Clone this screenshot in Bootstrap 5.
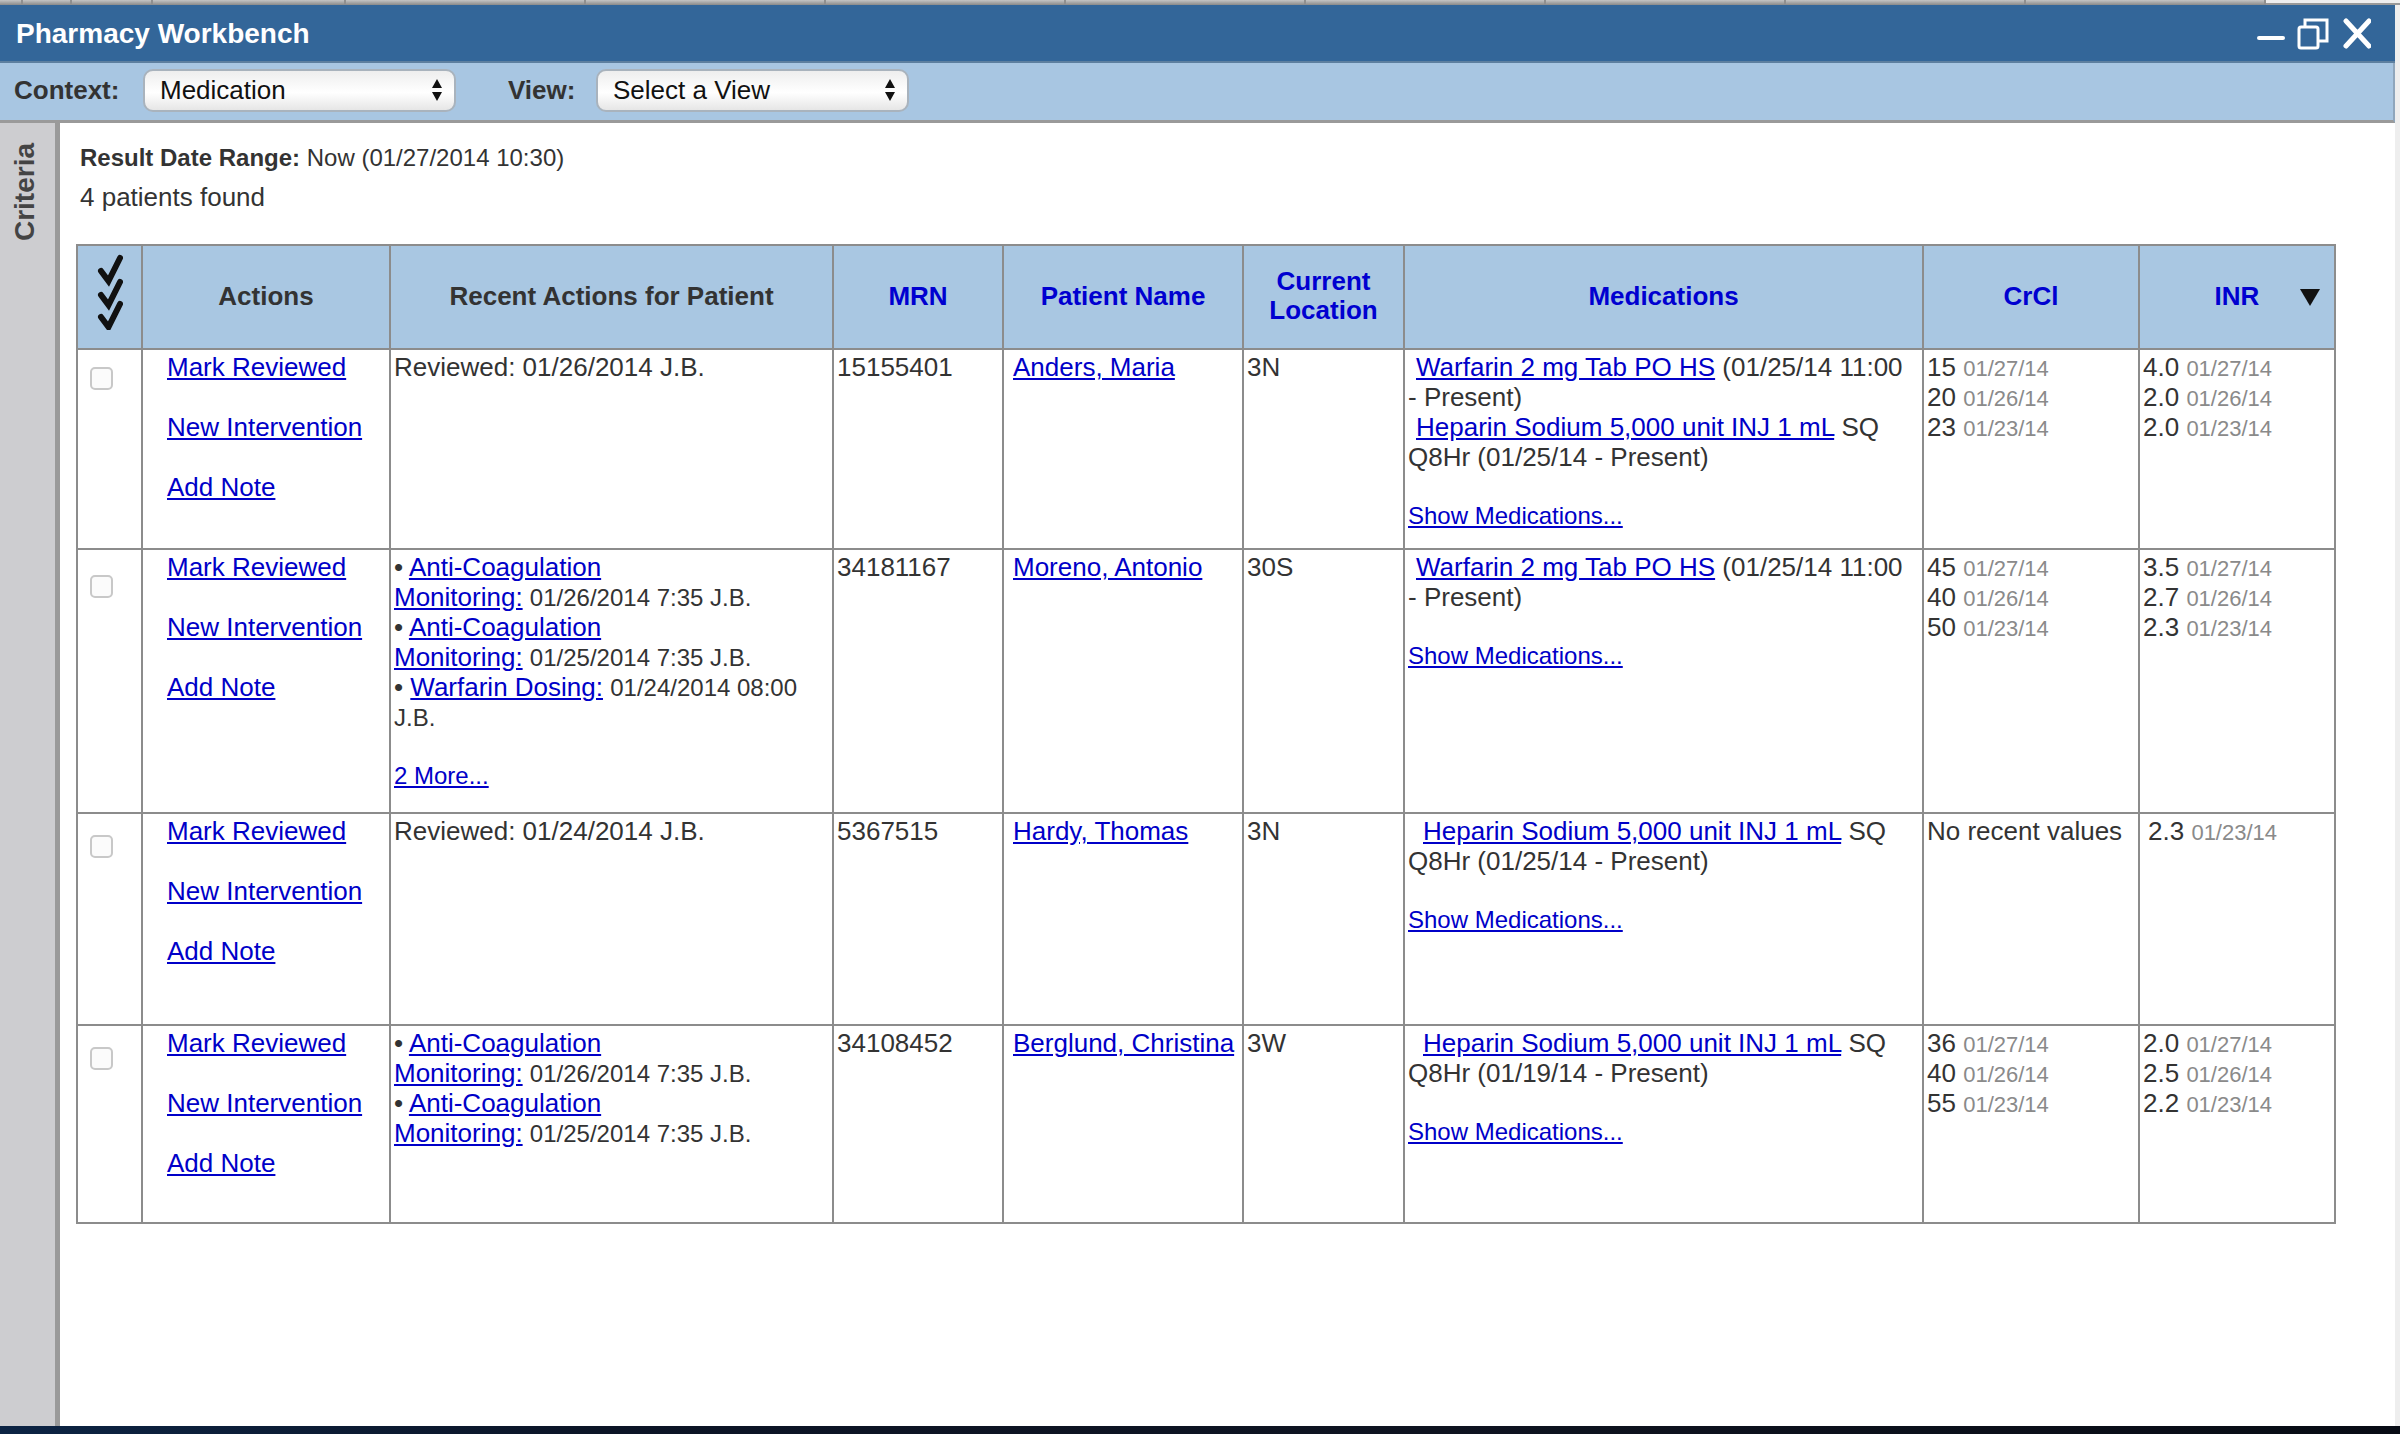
<!DOCTYPE html>
<html lang="en">
<head>
<meta charset="utf-8">
<title>Pharmacy Workbench</title>
<link href="https://cdn.jsdelivr.net/npm/bootstrap@5.3.0/dist/css/bootstrap.min.css" rel="stylesheet">
<style>
html,body{height:100%;margin:0;}
body{font-family:"Liberation Sans",Arial,sans-serif;font-size:26px;line-height:30px;color:#333;background:#eee;overflow:hidden;}
a{color:#0000c8;text-decoration:underline;}
.page-shell{height:1434px;}
.top-strip{height:5px;}
.top-tick{height:5px;background:linear-gradient(#c4c4c4,#8a8a8a);border-right:2px solid #8f8f8f;}
.top-rest{height:5px;background:#eee;border-bottom:2px solid #999;}
.t1{width:23px}.t2{width:49px}.t3{width:81px}.t4{width:193px}.t5{width:240px}
.wb-window{height:1421px;padding-right:5px;}
.wb-title{height:58px;background:#336699;color:#fff;font-size:28px;font-weight:700;padding:2px 24px 0 16px;border-bottom:2px solid #5d7f9f;}
.wb-tools{height:60px;background:#a8c6e2;border-bottom:3px solid #9a9a9a;padding:0 0 3px 14px;font-weight:700;border-right:2px solid #8fa6bc;}
.ctx-label{width:129px;}
.view-label{width:88px;margin-left:52px;}
.pick-wrap{width:313px;height:43px;border:2px solid #a9b3bd;border-radius:10px;background:linear-gradient(#eeeeee,#fff 55%,#e6e6e6);color:#111;font-weight:400;padding-left:15px;}
.pick-arrows{margin-right:11px;}
.wb-body{height:1303px;background:#fff;}
.crit-rail{width:60px;background:#cdcdd0;border-right:5px solid #9a9a9a;padding-top:20px;}
.crit-text{writing-mode:vertical-rl;transform:rotate(180deg);font-size:28px;font-weight:700;color:#444;margin-left:10px;width:30px;}
.wb-main{padding:20px 0 0 16px;margin-right:3px;}
.meta-line{padding-left:4px;height:39px;}
.meta-small{font-size:24px;}
.grid-wrap{margin-top:23px;}
.wb-grid{table-layout:fixed;border-collapse:collapse;width:2258px;border:2px solid #888;}
.wb-grid th,.wb-grid td{border:2px solid #8c8c8c;padding:2px 3px 0;vertical-align:top;font-weight:400;}
.wb-grid th{background:#a9c7e2;text-align:center;vertical-align:middle;font-weight:700;padding:0 0 2px;position:relative;line-height:29px;}
.wb-grid th.sortable{color:#0000d0;}
.c1{width:65px}.c2{width:248px}.c3{width:443px}.c4{width:170px}.c5{width:240px}.c6{width:161px}.c7{width:519px}.c8{width:216px}.c9{width:196px}
.hd-row{height:104px}.r1{height:200px}.r2{height:264px}.r3{height:212px}.r4{height:198px}
.wb-grid td.act-cell{padding-left:24px;}
.wb-grid td.name-cell{padding-left:9px;}
.wb-grid td.med-cell{padding-right:10px;}
.act-item{height:60px;}
.ck-box{width:23px;height:23px;margin:0;border:2px solid #c8c8c8;border-radius:5px;background:#fbfbfb;display:block;appearance:none;}
.ck-a{margin:15px 0 0 9px}.ck-b{margin:23px 0 0 9px}.ck-c{margin:19px 0 0 9px}
.sm-txt{font-size:24px;line-height:1;}
.gr{font-size:22px;color:#8a8a8a;line-height:1;}
.gap-line{height:28px;}
.ind1{margin-left:8px}.ind2{margin-left:15px}.ind3{margin-left:5px}
.checks-ico{display:block;margin:-8px auto 0;}
.sort-tri{position:absolute;right:14px;top:43px;width:0;height:0;border-left:10px solid transparent;border-right:10px solid transparent;border-top:17px solid #111;}
.bot-strip{height:8px;background:linear-gradient(90deg,#0c2444,#0b1426 25%,#0e1320 60%,#070b14);}
</style>
</head>
<body>
<div class="page-shell d-flex flex-column">
  <div class="top-strip d-flex">
    <div class="top-tick t1"></div><div class="top-tick t2"></div><div class="top-tick t3"></div><div class="top-tick t4"></div><div class="top-tick t5"></div><div class="top-tick t5"></div><div class="top-tick t5"></div><div class="top-tick t5"></div><div class="top-tick t5"></div><div class="top-tick t5"></div><div class="top-tick t5"></div><div class="top-tick t5"></div><div class="top-rest flex-grow-1"></div>
  </div>
  <div class="wb-window d-flex flex-column">
    <div class="wb-title d-flex align-items-center justify-content-between">
      <span>Pharmacy Workbench</span>
      <svg width="116" height="34" viewBox="0 0 116 34" aria-hidden="true">
        <rect x="2" y="19" width="28" height="4" rx="2" fill="#fff"/>
        <g fill="none" stroke="#fff" stroke-width="3">
          <rect x="44" y="10" width="19" height="21" rx="2"/>
          <path d="M50 10V3h22v21h-9"/>
        </g>
        <path d="M91 4l23 25M114 4L91 29" stroke="#fff" stroke-width="5" stroke-linecap="round" fill="none"/>
      </svg>
    </div>
    <div class="wb-tools d-flex align-items-center">
      <span class="ctx-label">Context:</span>
      <div class="pick-wrap d-flex align-items-center justify-content-between">
        <span>Medication</span>
        <svg class="pick-arrows" width="12" height="24" viewBox="0 0 12 24" aria-hidden="true"><path d="M6 1l5 9H1zM6 23l5-9H1z" fill="#111"/></svg>
      </div>
      <span class="view-label">View:</span>
      <div class="pick-wrap d-flex align-items-center justify-content-between">
        <span>Select a View</span>
        <svg class="pick-arrows" width="12" height="24" viewBox="0 0 12 24" aria-hidden="true"><path d="M6 1l5 9H1zM6 23l5-9H1z" fill="#111"/></svg>
      </div>
    </div>
    <div class="wb-body d-flex flex-grow-1">
      <div class="crit-rail flex-shrink-0"><div class="crit-text">Criteria</div></div>
      <div class="wb-main flex-grow-1">
        <div class="meta-line meta-small"><b>Result Date Range:</b> Now (01/27/2014 10:30)</div>
        <div class="meta-line">4 patients found</div>
        <div class="grid-wrap">
          <table class="wb-grid">
            <colgroup><col class="c1"><col class="c2"><col class="c3"><col class="c4"><col class="c5"><col class="c6"><col class="c7"><col class="c8"><col class="c9"></colgroup>
            <thead>
              <tr class="hd-row">
                <th>
                  <svg class="checks-ico" width="26" height="76" viewBox="0 0 26 76" aria-hidden="true"><g fill="none" stroke="#111" stroke-width="6" stroke-linecap="round" stroke-linejoin="miter"><path d="M4 17l7.500 10L23 4"/><path d="M4 41l7.500 10L23 28"/><path d="M4 63l7.500 10L23 50"/></g></svg>
                </th>
                <th>Actions</th>
                <th>Recent Actions for Patient</th>
                <th class="sortable">MRN</th>
                <th class="sortable">Patient Name</th>
                <th class="sortable">Current<br>Location</th>
                <th class="sortable">Medications</th>
                <th class="sortable">CrCl</th>
                <th class="sortable">INR<span class="sort-tri"></span></th>
              </tr>
            </thead>
            <tbody>
              <tr class="r1">
                <td><input type="checkbox" class="ck-box ck-a" aria-label="Select Anders, Maria"></td>
                <td class="act-cell"><div class="act-item"><a href="#">Mark Reviewed</a></div><div class="act-item"><a href="#">New Intervention</a></div><div class="act-item"><a href="#">Add Note</a></div></td>
                <td>Reviewed: 01/26/2014 J.B.</td>
                <td>15155401</td>
                <td class="name-cell"><a href="#">Anders, Maria</a></td>
                <td>3N</td>
                <td class="med-cell"><a href="#" class="ind1">Warfarin 2 mg Tab PO HS</a> (01/25/14 11:00 - Present)<br><a href="#" class="ind1">Heparin Sodium 5,000 unit INJ 1 mL</a> SQ Q8Hr (01/25/14 - Present)<div class="gap-line"></div><a href="#" class="sm-txt">Show Medications...</a></td>
                <td>15 <span class="gr">01/27/14</span><br>20 <span class="gr">01/26/14</span><br>23 <span class="gr">01/23/14</span></td>
                <td>4.0 <span class="gr">01/27/14</span><br>2.0 <span class="gr">01/26/14</span><br>2.0 <span class="gr">01/23/14</span></td>
              </tr>
              <tr class="r2">
                <td><input type="checkbox" class="ck-box ck-b" aria-label="Select Moreno, Antonio"></td>
                <td class="act-cell"><div class="act-item"><a href="#">Mark Reviewed</a></div><div class="act-item"><a href="#">New Intervention</a></div><div class="act-item"><a href="#">Add Note</a></div></td>
                <td>• <a href="#">Anti-Coagulation Monitoring:</a>&nbsp;<span class="sm-txt">01/26/2014&nbsp;7:35&nbsp;J.B.</span><br>• <a href="#">Anti-Coagulation Monitoring:</a>&nbsp;<span class="sm-txt">01/25/2014&nbsp;7:35&nbsp;J.B.</span><br>• <a href="#">Warfarin Dosing:</a> <span class="sm-txt">01/24/2014 08:00 J.B.</span><div class="gap-line"></div><a href="#" class="sm-txt">2 More...</a></td>
                <td>34181167</td>
                <td class="name-cell"><a href="#">Moreno, Antonio</a></td>
                <td>30S</td>
                <td class="med-cell"><a href="#" class="ind1">Warfarin 2 mg Tab PO HS</a> (01/25/14 11:00 - Present)<div class="gap-line"></div><a href="#" class="sm-txt">Show Medications...</a></td>
                <td>45 <span class="gr">01/27/14</span><br>40 <span class="gr">01/26/14</span><br>50 <span class="gr">01/23/14</span></td>
                <td>3.5 <span class="gr">01/27/14</span><br>2.7 <span class="gr">01/26/14</span><br>2.3 <span class="gr">01/23/14</span></td>
              </tr>
              <tr class="r3">
                <td><input type="checkbox" class="ck-box ck-c" aria-label="Select Hardy, Thomas"></td>
                <td class="act-cell"><div class="act-item"><a href="#">Mark Reviewed</a></div><div class="act-item"><a href="#">New Intervention</a></div><div class="act-item"><a href="#">Add Note</a></div></td>
                <td>Reviewed: 01/24/2014 J.B.</td>
                <td>5367515</td>
                <td class="name-cell"><a href="#">Hardy, Thomas</a></td>
                <td>3N</td>
                <td class="med-cell"><a href="#" class="ind2">Heparin Sodium 5,000 unit INJ 1 mL</a> SQ Q8Hr (01/25/14 - Present)<div class="gap-line"></div><a href="#" class="sm-txt">Show Medications...</a></td>
                <td>No recent values</td>
                <td><span class="ind3">2.3</span> <span class="gr">01/23/14</span></td>
              </tr>
              <tr class="r4">
                <td><input type="checkbox" class="ck-box ck-c" aria-label="Select Berglund, Christina"></td>
                <td class="act-cell"><div class="act-item"><a href="#">Mark Reviewed</a></div><div class="act-item"><a href="#">New Intervention</a></div><div class="act-item"><a href="#">Add Note</a></div></td>
                <td>• <a href="#">Anti-Coagulation Monitoring:</a>&nbsp;<span class="sm-txt">01/26/2014&nbsp;7:35&nbsp;J.B.</span><br>• <a href="#">Anti-Coagulation Monitoring:</a>&nbsp;<span class="sm-txt">01/25/2014&nbsp;7:35&nbsp;J.B.</span></td>
                <td>34108452</td>
                <td class="name-cell"><a href="#">Berglund, Christina</a></td>
                <td>3W</td>
                <td class="med-cell"><a href="#" class="ind2">Heparin Sodium 5,000 unit INJ 1 mL</a> SQ Q8Hr (01/19/14 - Present)<div class="gap-line"></div><a href="#" class="sm-txt">Show Medications...</a></td>
                <td>36 <span class="gr">01/27/14</span><br>40 <span class="gr">01/26/14</span><br>55 <span class="gr">01/23/14</span></td>
                <td>2.0 <span class="gr">01/27/14</span><br>2.5 <span class="gr">01/26/14</span><br>2.2 <span class="gr">01/23/14</span></td>
              </tr>
            </tbody>
          </table>
        </div>
      </div>
    </div>
  </div>
  <div class="bot-strip"></div>
</div>
<script src="https://cdn.jsdelivr.net/npm/bootstrap@5.3.0/dist/js/bootstrap.bundle.min.js"></script>
</body>
</html>
